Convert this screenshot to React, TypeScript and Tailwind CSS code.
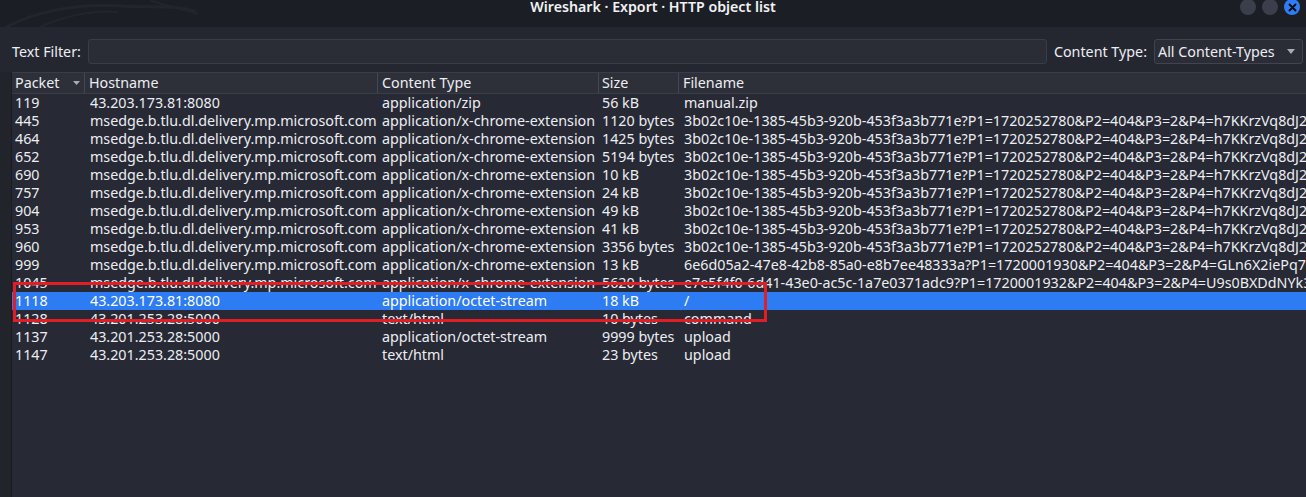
import React from "react";

type Row = {
  packet: string;
  host: string;
  type: string;
  size: string;
  file: string;
};

const MS = "msedge.b.tlu.dl.delivery.mp.microsoft.com";
const CRX = "application/x-chrome-extension";
const F1 =
  "3b02c10e-1385-45b3-920b-453f3a3b771e?P1=1720252780&P2=404&P3=2&P4=h7KKrzVq8dJ2mQx4";

const rows: Row[] = [
  { packet: "119", host: "43.203.173.81:8080", type: "application/zip", size: "56 kB", file: "manual.zip" },
  { packet: "445", host: MS, type: CRX, size: "1120 bytes", file: F1 },
  { packet: "464", host: MS, type: CRX, size: "1425 bytes", file: F1 },
  { packet: "652", host: MS, type: CRX, size: "5194 bytes", file: F1 },
  { packet: "690", host: MS, type: CRX, size: "10 kB", file: F1 },
  { packet: "757", host: MS, type: CRX, size: "24 kB", file: F1 },
  { packet: "904", host: MS, type: CRX, size: "49 kB", file: F1 },
  { packet: "953", host: MS, type: CRX, size: "41 kB", file: F1 },
  { packet: "960", host: MS, type: CRX, size: "3356 bytes", file: F1 },
  {
    packet: "999",
    host: MS,
    type: CRX,
    size: "13 kB",
    file: "6e6d05a2-47e8-42b8-85a0-e8b7ee48333a?P1=1720001930&P2=404&P3=2&P4=GLn6X2iePq7w",
  },
  {
    packet: "1045",
    host: MS,
    type: CRX,
    size: "5620 bytes",
    file: "e7e5f4f0-6d41-43e0-ac5c-1a7e0371adc9?P1=1720001932&P2=404&P3=2&P4=U9s0BXDdNYk3",
  },
  { packet: "1118", host: "43.203.173.81:8080", type: "application/octet-stream", size: "18 kB", file: "/" },
  { packet: "1128", host: "43.201.253.28:5000", type: "text/html", size: "10 bytes", file: "command" },
  { packet: "1137", host: "43.201.253.28:5000", type: "application/octet-stream", size: "9999 bytes", file: "upload" },
  { packet: "1147", host: "43.201.253.28:5000", type: "text/html", size: "23 bytes", file: "upload" },
];

const font = { fontFamily: '"Noto Sans", "Open Sans", sans-serif' };

const App: React.FC = () => {
  return (
    <div
      className="w-[1306px] h-[497px] overflow-hidden flex flex-col bg-[#252730] text-[14.3px] leading-[18px] text-[#eceef3]"
      style={font}
    >
      {/* Title bar */}
      <div className="relative h-[27px] shrink-0 bg-[#1c1e25] flex items-start justify-center overflow-hidden">
        {/* faint dragon watermark */}
        <svg className="absolute left-0 top-0" width="220" height="27" viewBox="0 0 220 27" fill="none">
          <path d="M6 27 C40 10 80 4 120 6 C150 8 175 4 196 12" stroke="#23252d" strokeWidth="3" />
          <path d="M40 27 C70 14 95 10 118 12" stroke="#23252d" strokeWidth="2" />
          <path d="M150 0 C165 6 180 8 198 14" stroke="#23252d" strokeWidth="2" />
        </svg>
        <span className="relative font-semibold text-[14.2px] leading-[14px] text-[#f1f2f5]">
          Wireshark · Export · HTTP object list
        </span>
        <div className="absolute right-[6px] top-[-1px] flex gap-[6px]">
          <div className="w-[16px] h-[16px] rounded-full bg-[#3b3e4b]" />
          <div className="w-[16px] h-[16px] rounded-full bg-[#3b3e4b]" />
          <div className="w-[16px] h-[16px] rounded-full bg-[#2f7df3] flex items-center justify-center">
            <svg width="9" height="9" viewBox="0 0 9 9">
              <path d="M1.5 1.5 L7.5 7.5 M7.5 1.5 L1.5 7.5" stroke="#0b0d12" strokeWidth="2" strokeLinecap="round" />
            </svg>
          </div>
        </div>
      </div>

      {/* Filter row */}
      <div className="h-[45px] shrink-0 flex items-start pt-[12px] pl-[12px] pr-[3px]">
        <span className="h-[25px] flex items-center">Text Filter:</span>
        <div className="ml-[7px] flex-1 h-[25px] rounded-[3px] border border-[#3a3c47] bg-[#2a2c36]" />
        <span className="ml-[7px] h-[25px] flex items-center">Content Type:</span>
        <div className="ml-[7px] w-[149px] h-[25px] rounded-[3px] border border-[#41434f] bg-[#2a2c36] flex items-center justify-between pl-[3px] pr-[7px]">
          <span>All Content-Types</span>
          <svg width="8" height="5" viewBox="0 0 8 5">
            <path d="M0 0 L8 0 L4 5 Z" fill="#a9abb4" />
          </svg>
        </div>
      </div>

      {/* Table */}
      <div className="flex-1 flex">
        <div className="w-[12px] shrink-0 bg-[#22242b] border-r border-[#1b1c22]" />
        <div className="relative flex-1 bg-[#272934] overflow-hidden border-t border-[#3a3c47]">
          <div className="flex h-[21px] bg-[#2e3039] border-b border-[#3a3c47]">
            <div className="w-[73px] shrink-0 flex items-center justify-between pl-[3px] pr-[4px] border-r border-[#454753]">
              <span>Packet</span>
              <svg width="7" height="4" viewBox="0 0 7 4">
                <path d="M0 0 L7 0 L3.5 4 Z" fill="#a9abb4" />
              </svg>
            </div>
            <div className="w-[293px] shrink-0 flex items-center pl-[4px] border-r border-[#454753]">Hostname</div>
            <div className="w-[221px] shrink-0 flex items-center pl-[4px] border-r border-[#454753]">Content Type</div>
            <div className="w-[80px] shrink-0 flex items-center pl-[3px] border-r border-[#454753]">Size</div>
            <div className="flex-1 flex items-center pl-[4px]">Filename</div>
          </div>
          {rows.map((r) => {
            const selected = r.packet === "1118";
            return (
              <div
                key={r.packet}
                className={
                  "flex h-[18px] items-center whitespace-nowrap " +
                  (selected ? "bg-[#2d7cf4] text-white" : "")
                }
              >
                <div className="w-[73px] shrink-0 pl-[3px]">{r.packet}</div>
                <div className="w-[293px] shrink-0 pl-[5px] overflow-hidden">{r.host}</div>
                <div className="w-[221px] shrink-0 pl-[4px] overflow-hidden">{r.type}</div>
                <div className="w-[80px] shrink-0 pl-[3px] overflow-hidden">{r.size}</div>
                <div className="flex-1 pl-[5px] overflow-hidden">{r.file}</div>
              </div>
            );
          })}
          {/* annotation box */}
          <div className="absolute left-[1px] top-[209px] w-[754px] h-[40px] border-[3px] border-[#e11d25]" />
        </div>
      </div>
    </div>
  );
};

export default App;
